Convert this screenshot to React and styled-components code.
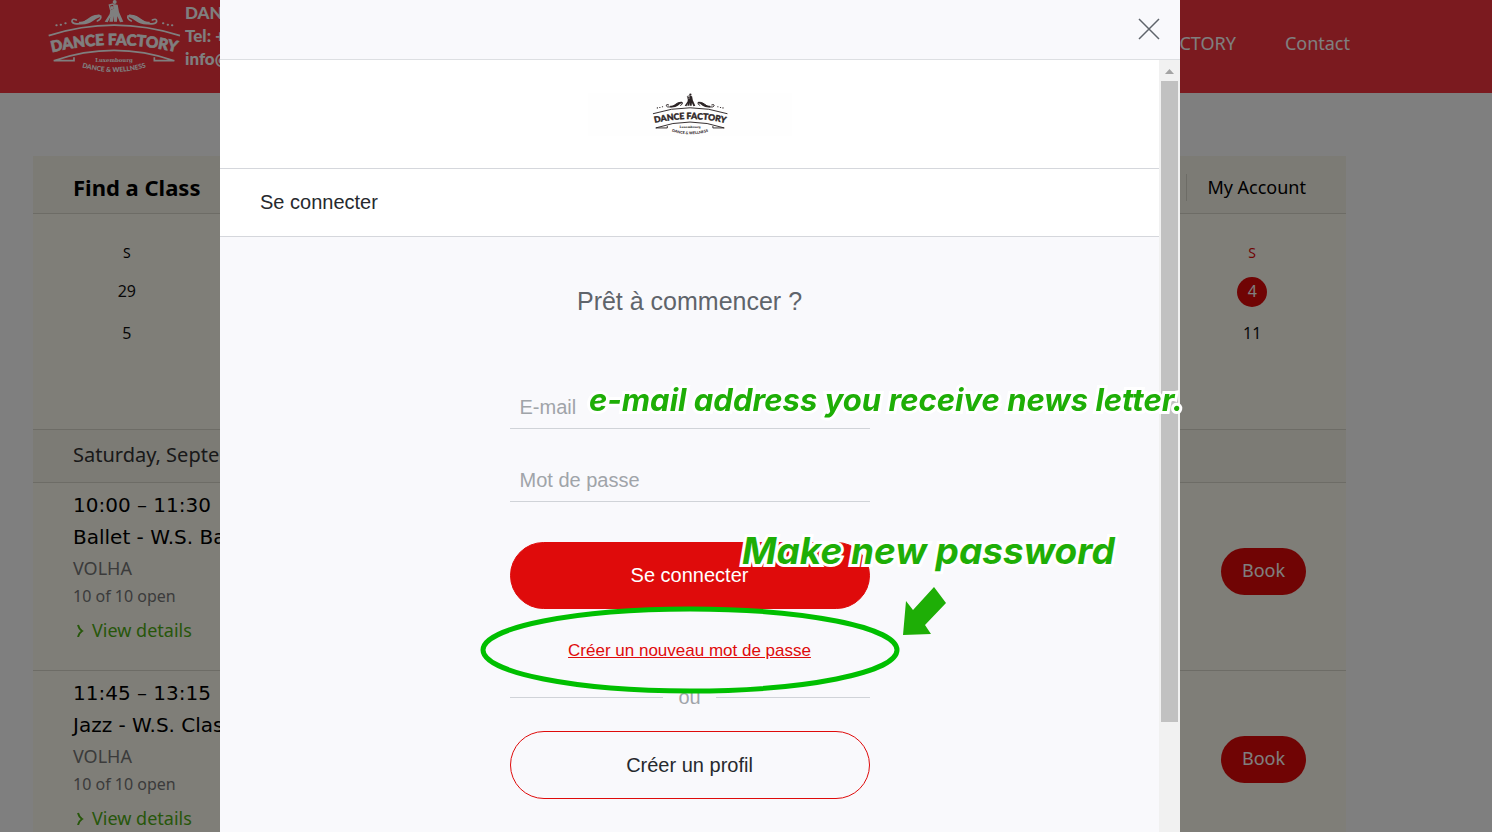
import { useId } from "react";
import styled, { createGlobalStyle } from "styled-components";

const days = [
  { name: "S", dates: [29, 5] },
  { name: "M", dates: [30, 6] },
  { name: "T", dates: [31, 7] },
  { name: "W", dates: [1, 8] },
  { name: "T", dates: [2, 9] },
  { name: "F", dates: [3, 10] },
  { name: "S", dates: [4, 11], selected: 4 },
];

const classes = [
  { time: "10:00 – 11:30", name: "Ballet - W.S. Ballet", teacher: "VOLHA" },
  { time: "11:45 – 13:15", name: "Jazz - W.S. Classic", teacher: "VOLHA" },
];

function Logo({ width, color }) {
  const id = useId();
  return (
    <svg
      width={width}
      viewBox="140 -2 402 222"
      fill="none"
      stroke={color}
      role="img"
      aria-label="Dance Factory Luxembourg"
    >
      <defs>
        <path id={`${id}a`} d="M150 156Q341 110 534 156" />
        <path id={`${id}b`} d="M240 198Q341 230 442 198" />
      </defs>
      {/* dancing couple */}
      <g fill={color} stroke="none">
        <circle cx="343" cy="4" r="6" />
        <circle cx="335" cy="21" r="5" />
        <path d="M338 10L352 12L356 34L369 63L359 65L351 47L350 63H341V40z" />
        <path d="M330 27L341 24V46L338 63H327L330 49L322 65L313 63L328 40z" />
      </g>
      <path d="M331 29L327 13L339 10" strokeWidth="4" />
      <g id={`${id}s`} strokeLinecap="round">
        <path
          d="M228 58q-14 -6 -13 5q4 9 22 6c18 -2 25 -14 39 -21q14 -6 25 -2q3 9 -10 15"
          strokeWidth="5"
        />
        <path
          d="M236 67q15 2 29 -8t33 -14q-12 4 -24 14t-38 8z"
          fill={color}
          strokeWidth="8"
        />
        <path d="M168 74h1M181 72h1M195 68h1" strokeWidth="6" />
      </g>
      <use href={`#${id}s`} transform="translate(684 0) scale(-1 1)" />
      <path d="M145 105Q341 42 539 105" strokeWidth="5" />
      <path d="M160 180Q341 118 522 180H462V170M160 180H221V170" strokeWidth="5" />
      <g fill={color} textAnchor="middle">
        <text
          fontFamily="Lato, sans-serif"
          fontWeight="900"
          fontSize="46"
          strokeWidth="2"
        >
          <textPath href={`#${id}a`} startOffset="50%">
            DANCE FACTORY
          </textPath>
        </text>
        <text
          x="341"
          y="183"
          fontFamily="'DejaVu Serif', serif"
          fontWeight="700"
          fontSize="16"
          stroke="none"
        >
          Luxembourg
        </text>
        <text
          fontFamily="Lato, sans-serif"
          fontWeight="900"
          fontSize="20"
          stroke="none"
        >
          <textPath href={`#${id}b`} startOffset="50%">
            DANCE &amp; WELLNESS
          </textPath>
        </text>
      </g>
    </svg>
  );
}

function ClassRow({ item }) {
  return (
    <Row>
      <div>
        <ClassTitle>{item.time}</ClassTitle>
        <ClassTitle>{item.name}</ClassTitle>
        <Teacher>{item.teacher}</Teacher>
        <Spots>10 of 10 open</Spots>
        <Details href="#details">
          <svg width="7" height="14" viewBox="0 0 7 14" fill="none">
            <path d="M1 2q1 4 4 6q-3 2 -4 6" stroke="currentColor" strokeWidth="2" />
          </svg>
          View details
        </Details>
      </div>
      <BookButton type="button">Book</BookButton>
    </Row>
  );
}

function LoginModal() {
  return (
    <Modal role="dialog" aria-label="Se connecter">
      <ModalHeader>
        <CloseButton type="button" aria-label="Fermer">
          <svg width="22" height="22" viewBox="0 0 22 22">
            <path d="M1 1L21 21M21 1L1 21" stroke="#5f646b" strokeWidth="1.5" />
          </svg>
        </CloseButton>
      </ModalHeader>
      <ModalBody>
        <ModalContent>
          <Brand>
            <BrandImage>
              <Logo width={76} color="#2b2324" />
            </BrandImage>
          </Brand>
          <Heading>Se connecter</Heading>
          <Form onSubmit={(e) => e.preventDefault()}>
            <Title>Prêt à commencer ?</Title>
            <Field type="email" placeholder="E-mail" aria-label="E-mail" />
            <Field
              type="password"
              placeholder="Mot de passe"
              aria-label="Mot de passe"
            />
            <PillButton type="submit" $primary>
              Se connecter
            </PillButton>
            <ResetLink href="#reset">Créer un nouveau mot de passe</ResetLink>
            <Divider>ou</Divider>
            <PillButton type="button">Créer un profil</PillButton>
          </Form>
        </ModalContent>
        <Scrollbar>
          <ScrollArrow>
            <svg width="9" height="5" viewBox="0 0 9 5">
              <path d="M0 5L4.5 0L9 5z" fill="#a3a3a3" />
            </svg>
          </ScrollArrow>
          <ScrollThumb />
        </Scrollbar>
      </ModalBody>
      <Ring viewBox="0 0 420 88">
        <ellipse cx="210" cy="44" rx="207" ry="41" />
      </Ring>
      <Note $top={380} $left={369} $size={31}>
        e-mail address you receive news letter.
      </Note>
      <Note $top={531} $left={522} $size={37}>
        Make new password
      </Note>
      <Arrow viewBox="0 0 43 49">
        <path d="M31 0L43 16L22 38L28 47L0 48L3 14L10 23z" />
      </Arrow>
    </Modal>
  );
}

function App() {
  return (
    <>
      <GlobalStyle />
      <SiteHeader>
        <Logo width={134} color="#fff" />
        <Contact>
          <div>DANCE FACTORY</div>
          <div>Tel: +352 26 12</div>
          <div>info@dancefactory.lu</div>
        </Contact>
        <Nav>
          <a href="#about">DANCE FACTORY</a>
          <a href="#contact">Contact</a>
        </Nav>
      </SiteHeader>
      <Schedule>
        <ScheduleHeader>
          <h2>Find a Class</h2>
          <a href="#account">My Account</a>
        </ScheduleHeader>
        <Calendar>
          {days.map((day, i) => (
            <Day key={i}>
              <DayName $selected={Boolean(day.selected)}>{day.name}</DayName>
              {day.dates.map((date) => (
                <DayDate key={date} type="button" $selected={date === day.selected}>
                  {date}
                </DayDate>
              ))}
            </Day>
          ))}
        </Calendar>
        <DateRow>Saturday, September 4</DateRow>
        {classes.map((item) => (
          <ClassRow key={item.time} item={item} />
        ))}
      </Schedule>
      <Overlay>
        <LoginModal />
      </Overlay>
    </>
  );
}

export default App;

const GlobalStyle = createGlobalStyle`
  * {
    box-sizing: border-box;
  }
  body {
    margin: 0;
    background: #fff;
    color: #000;
    font-family: "Noto Sans", sans-serif;
    font-size: 18px;
    overflow: hidden;
  }
  button, input {
    font: inherit;
    margin: 0;
    padding: 0;
    border: none;
    background: none;
  }
  a {
    color: inherit;
    text-decoration: none;
  }
  svg {
    display: block;
    flex-shrink: 0;
  }
`;
const SiteHeader = styled.header`
  display: flex;
  align-items: flex-start;
  height: 93px;
  padding: 0 142px 0 47px;
  background: #f7343e;
  color: #fff;
`;
const Contact = styled.div`
  padding: 1px 0 0 4px;
  font-family: Lato, sans-serif;
  font-weight: 900;
  font-size: 17px;
  line-height: 23px;
`;
const Nav = styled.nav`
  display: flex;
  gap: 49px;
  margin-left: auto;
  line-height: 86px;
`;
const Schedule = styled.main`
  margin: 63px 146px 0 33px;
  background: #fefcf1;
`;
const ScheduleHeader = styled.div`
  display: flex;
  align-items: center;
  justify-content: space-between;
  height: 58px;
  padding: 6px 40px 0;
  background: #f8f6eb;
  border-bottom: 1px solid #dad8cd;
  h2 {
    margin: 0;
    font-size: 22px;
    line-height: 27px;
  }
  a {
    padding-left: 20px;
    border-left: 1px solid #dad8cd;
    line-height: 27px;
  }
`;
const Calendar = styled.div`
  display: grid;
  grid-template-columns: repeat(7, 1fr);
  height: 215px;
  padding-top: 29px;
`;
const Day = styled.div`
  display: flex;
  flex-direction: column;
  align-items: center;
  gap: 12px;
`;
const DayName = styled.div`
  font-size: 14px;
  line-height: 20px;
  padding-bottom: 2px;
  color: ${(p) => (p.$selected ? "#e00808" : "#000")};
`;
const DayDate = styled.button`
  width: 30px;
  height: 30px;
  padding-bottom: 2px;
  border-radius: 50%;
  font-size: 16px;
  line-height: 28px;
  background: ${(p) => (p.$selected ? "#e00808" : "none")};
  color: ${(p) => (p.$selected ? "#fff" : "#111")};
`;
const DateRow = styled.div`
  height: 54px;
  padding-left: 40px;
  background: #f8f6eb;
  border-top: 1px solid #dad8cd;
  border-bottom: 1px solid #dad8cd;
  color: #333;
  font-size: 20px;
  line-height: 50px;
`;
const Row = styled.section`
  display: flex;
  align-items: flex-start;
  justify-content: space-between;
  height: 188px;
  padding: 6px 40px 0;
  border-bottom: 1px solid #dad8cd;
`;
const ClassTitle = styled.div`
  font-family: "DejaVu Sans", sans-serif;
  font-size: 20px;
  line-height: 32px;
`;
const Teacher = styled.div`
  color: #777;
  line-height: 30px;
`;
const Spots = styled.div`
  color: #777;
  font-size: 16px;
  line-height: 26px;
`;
const Details = styled.a`
  display: flex;
  align-items: center;
  gap: 8px;
  padding: 6px 0 0 4px;
  color: #4fae14;
  line-height: 30px;
`;
const BookButton = styled.button`
  width: 85px;
  height: 47px;
  margin-top: 59px;
  padding-bottom: 3px;
  border-radius: 24px;
  background: #e00808;
  color: #fff;
`;
const Overlay = styled.div`
  position: fixed;
  inset: 0;
  display: flex;
  padding: 0 312px 0 220px;
  background: rgba(0, 0, 0, 0.5);
  font-family: "Liberation Sans", Arial, sans-serif;
  font-size: 20px;
`;
const Modal = styled.div`
  position: relative;
  flex: 1;
  display: flex;
  flex-direction: column;
  background: #f9f9fc;
  color: #26292e;
`;
const ModalHeader = styled.div`
  display: flex;
  align-items: center;
  justify-content: flex-end;
  height: 60px;
  padding: 0 20px 2px;
  border-bottom: 1px solid #dddfe2;
`;
const CloseButton = styled.button`
  cursor: pointer;
`;
const ModalBody = styled.div`
  display: flex;
  flex: 1;
  min-height: 0;
`;
const ModalContent = styled.div`
  flex: 1;
  overflow: hidden;
`;
const Brand = styled.div`
  display: flex;
  justify-content: center;
  height: 109px;
  padding-top: 33px;
  background: #fff;
  border-bottom: 1px solid #d5d7dc;
`;
const BrandImage = styled.div`
  display: flex;
  justify-content: center;
  width: 204px;
  height: 43px;
  background: #fefefe;
`;
const Heading = styled.h1`
  margin: 0;
  padding-left: 40px;
  background: #fff;
  border-bottom: 1px solid #d5d7dc;
  font-size: 20px;
  font-weight: 400;
  line-height: 67px;
`;
const Form = styled.form`
  display: flex;
  flex-direction: column;
  width: 360px;
  margin: 0 auto;
  padding-top: 50px;
`;
const Title = styled.h2`
  margin: 0 0 70px;
  color: #5f646b;
  font-size: 25px;
  font-weight: 400;
  line-height: 28px;
  text-align: center;
`;
const Field = styled.input`
  height: 44px;
  padding: 2px 10px 0;
  border-bottom: 1px solid #d0d3d8;
  outline: none;
  & + & {
    margin-top: 29px;
  }
  &::placeholder {
    color: #a0a4a9;
    opacity: 1;
  }
`;
const PillButton = styled.button`
  height: ${(p) => (p.$primary ? "67px" : "68px")};
  margin-top: ${(p) => (p.$primary ? "40px" : "22px")};
  border: 1px solid #df0b0b;
  border-radius: 34px;
  background: ${(p) => (p.$primary ? "#df0b0b" : "none")};
  color: ${(p) => (p.$primary ? "#fff" : "#26292e")};
  cursor: pointer;
`;
const ResetLink = styled.a`
  align-self: center;
  margin-top: 30px;
  color: #df0b0b;
  font-size: 17px;
  line-height: 24px;
  text-decoration: underline;
`;
const Divider = styled.div`
  display: flex;
  align-items: center;
  gap: 15px;
  margin-top: 22px;
  color: #a0a4a9;
  line-height: 24px;
  &::before,
  &::after {
    content: "";
    flex: 1;
    height: 1px;
    background: #d0d3d8;
  }
`;
const Scrollbar = styled.div`
  width: 21px;
  padding: 0 2px;
  background: #f1f1f1;
`;
const ScrollArrow = styled.div`
  display: flex;
  align-items: center;
  justify-content: center;
  height: 21px;
  padding-top: 2px;
`;
const ScrollThumb = styled.div`
  height: 83%;
  background: #c1c1c1;
`;
/* hand-drawn hints lying over the dialog */
const Note = styled.div`
  position: absolute;
  top: ${(p) => p.$top}px;
  left: ${(p) => p.$left}px;
  color: #1eae06;
  font-family: Inter, sans-serif;
  font-size: ${(p) => p.$size}px;
  font-style: italic;
  font-weight: 700;
  line-height: 40px;
  white-space: nowrap;
  -webkit-text-stroke: 6px #fff;
  paint-order: stroke fill;
  pointer-events: none;
`;
const Ring = styled.svg`
  position: absolute;
  top: 606px;
  left: 260px;
  width: 420px;
  fill: none;
  stroke: #00bf00;
  stroke-width: 5px;
  pointer-events: none;
`;
const Arrow = styled.svg`
  position: absolute;
  top: 587px;
  left: 683px;
  width: 43px;
  fill: #1eae06;
  pointer-events: none;
`;
